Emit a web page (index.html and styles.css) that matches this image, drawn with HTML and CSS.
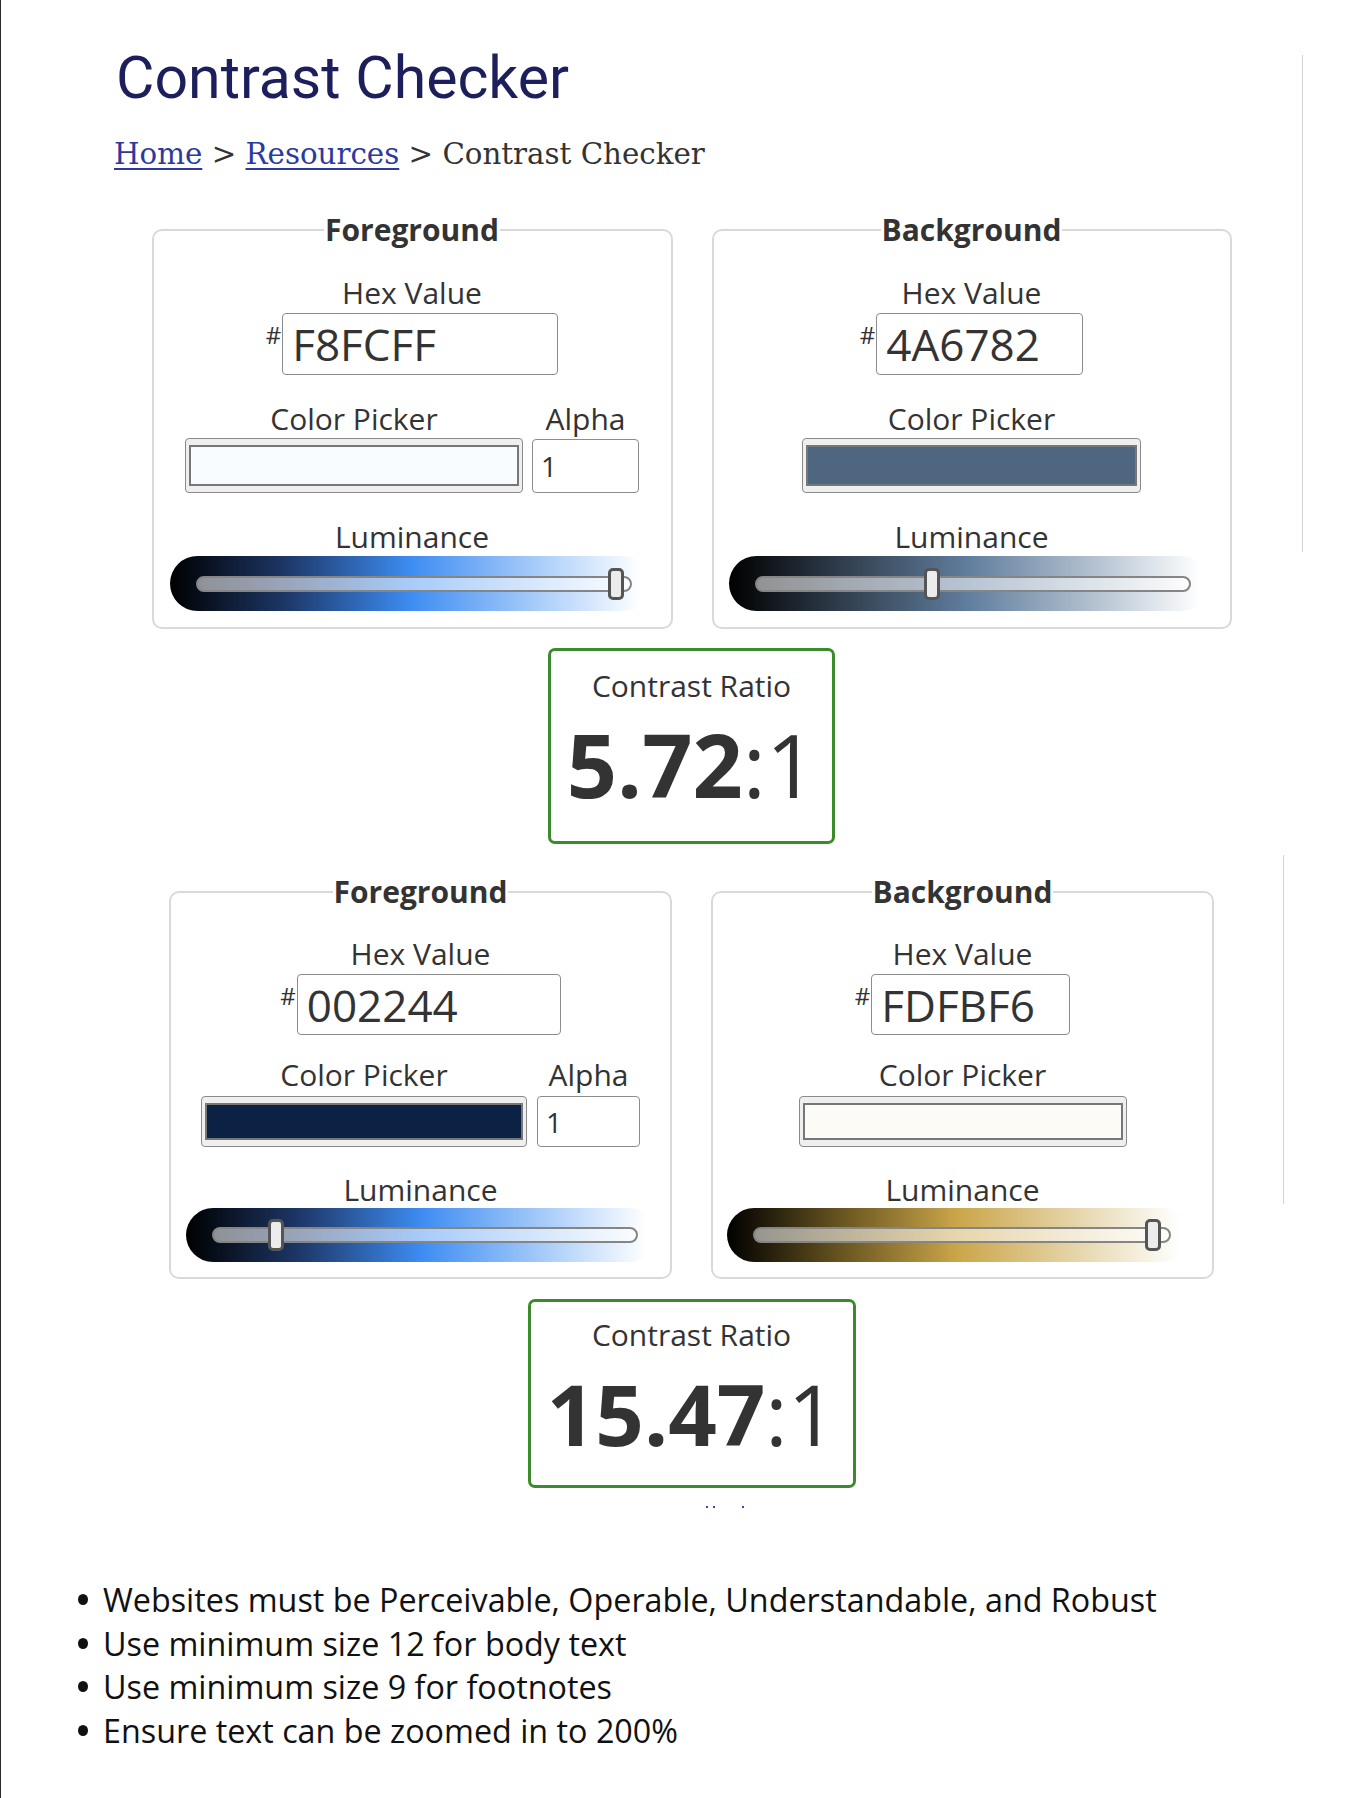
FILE: index.html
```html
<!DOCTYPE html>
<html lang="en">
<head>
<meta charset="utf-8">
<title>Contrast Checker</title>
<link rel="stylesheet" href="styles.css">
</head>
<body>
<div class="page">
  <span class="side-rule side-rule-a"></span>
  <span class="side-rule side-rule-b"></span>
  <main class="content">
    <h1 class="title">Contrast Checker</h1>
    <p class="crumbs"><a class="crumb-link" href="#">Home</a> &gt; <a class="crumb-link" href="#">Resources</a> &gt; Contrast Checker</p>

    <section class="checker checker-a">
      <div class="pair">
        <fieldset class="panel panel-a fg-a">
          <legend class="panel-legend">Foreground</legend>
          <div class="field-label">Hex Value</div>
          <div class="hex-row"><span class="hash">#</span><div class="hex-input">F8FCFF</div></div>
          <div class="picker-row">
            <div class="picker-col">
              <div class="field-label">Color Picker</div>
              <div class="picker"><div class="swatch" style="background:#f8fcff"></div></div>
            </div>
            <div class="alpha-col">
              <div class="field-label">Alpha</div>
              <div class="alpha-input">1</div>
            </div>
          </div>
          <div class="field-label lum-label">Luminance</div>
          <div class="lum lum-blue"><div class="track"><span class="thumb" style="left:96.8%"></span></div></div>
        </fieldset>

        <fieldset class="panel panel-a bg-a">
          <legend class="panel-legend">Background</legend>
          <div class="field-label">Hex Value</div>
          <div class="hex-row"><span class="hash">#</span><div class="hex-input">4A6782</div></div>
          <div class="picker-row">
            <div class="picker-col">
              <div class="field-label">Color Picker</div>
              <div class="picker"><div class="swatch" style="background:#4f6680"></div></div>
            </div>
          </div>
          <div class="field-label lum-label">Luminance</div>
          <div class="lum lum-slate"><div class="track"><span class="thumb" style="left:40.4%"></span></div></div>
        </fieldset>
      </div>

      <div class="ratio ratio-a">
        <div class="ratio-label">Contrast Ratio</div>
        <div class="ratio-value"><b class="ratio-num">5.72</b>:1</div>
      </div>
    </section>

    <section class="checker checker-b">
      <div class="pair">
        <fieldset class="panel panel-b fg-b">
          <legend class="panel-legend">Foreground</legend>
          <div class="field-label">Hex Value</div>
          <div class="hex-row"><span class="hash">#</span><div class="hex-input">002244</div></div>
          <div class="picker-row">
            <div class="picker-col">
              <div class="field-label">Color Picker</div>
              <div class="picker"><div class="swatch" style="background:#0b2244"></div></div>
            </div>
            <div class="alpha-col">
              <div class="field-label">Alpha</div>
              <div class="alpha-input">1</div>
            </div>
          </div>
          <div class="field-label lum-label">Luminance</div>
          <div class="lum lum-blue"><div class="track"><span class="thumb" style="left:14.9%"></span></div></div>
        </fieldset>

        <fieldset class="panel panel-b bg-b">
          <legend class="panel-legend">Background</legend>
          <div class="field-label">Hex Value</div>
          <div class="hex-row"><span class="hash">#</span><div class="hex-input">FDFBF6</div></div>
          <div class="picker-row">
            <div class="picker-col">
              <div class="field-label">Color Picker</div>
              <div class="picker"><div class="swatch" style="background:#fcfbf6"></div></div>
            </div>
          </div>
          <div class="field-label lum-label">Luminance</div>
          <div class="lum lum-gold"><div class="track"><span class="thumb" style="left:96.2%"></span></div></div>
        </fieldset>
      </div>

      <div class="ratio ratio-b">
        <div class="ratio-label">Contrast Ratio</div>
        <div class="ratio-value"><b class="ratio-num">15.47</b>:1</div>
      </div>
      <div class="clipped-dots"><span class="dot"></span><span class="dot"></span><span class="dot dot-far"></span></div>
    </section>

    <ul class="tips">
      <li class="tip">Websites must be Perceivable, Operable, Understandable, and Robust</li>
      <li class="tip">Use minimum size 12 for body text</li>
      <li class="tip">Use minimum size 9 for footnotes</li>
      <li class="tip">Ensure text can be zoomed in to 200%</li>
    </ul>
  </main>
</div>
</body>
</html>
```

FILE: styles.css
```css
html, body {
  margin: 0;
  padding: 0;
  background: #ffffff;
}

body {
  min-height: 1798px;
  border-left: 1px solid #2a2a2a;
  box-sizing: border-box;
  font-family: "Open Sans", "Noto Sans", sans-serif;
  color: #333333;
}

.page {
  position: relative;
  padding: 43px 0 0 113px;
}

.side-rule {
  position: absolute;
  width: 1px;
  background: #d4d4d4;
}
.side-rule-a { left: 1301px; top: 55px; height: 497px; }
.side-rule-b { left: 1282px; top: 855px; height: 349px; }

.content {
  width: 1155px;
}

.title {
  margin: 0 0 0 2px;
  font-family: Roboto, "Liberation Sans", sans-serif;
  font-weight: 400;
  font-size: 59px;
  line-height: 70px;
  color: #1c1f5c;
}

.crumbs {
  margin: 21px 0 0;
  font-family: "DejaVu Serif", "Liberation Serif", serif;
  font-size: 29.3px;
  line-height: 40px;
  color: #333333;
}

.crumb-link {
  color: #2b3a9c;
  text-decoration: underline;
  text-decoration-thickness: 2px;
  text-underline-offset: 4px;
}

/* checker sections */
.checker {
  display: flex;
  flex-direction: column;
  align-items: center;
}
.checker-a { margin-top: 38px; }
.checker-b { margin-top: 30px; }

.pair {
  display: flex;
  gap: 39px;
  align-items: flex-start;
}

.panel {
  margin: 0;
  min-width: 0;
  border: 2px solid #d9d9d9;
  border-radius: 10px;
  box-sizing: border-box;
  display: flex;
  flex-direction: column;
  align-items: center;
}

.panel-a { padding: 26px 0 16px; }
.panel-b { padding: 25px 0 15px; }

.fg-a { width: 521px; }
.bg-a { width: 520px; }
.fg-b, .bg-b { width: 503px; }

.panel-legend {
  margin: 0 auto;
  padding: 0 1px;
  font-weight: 700;
  font-size: 30px;
  line-height: 36px;
  color: #333333;
}

.field-label {
  font-size: 30px;
  line-height: 38px;
  color: #333333;
  text-align: center;
}

.hex-row {
  display: flex;
  align-items: flex-start;
  margin-top: 1px;
}

.hash {
  font-size: 24px;
  line-height: 24px;
  margin-top: 10px;
  margin-right: 1px;
  color: #333333;
}

.hex-input {
  box-sizing: border-box;
  border: 1.5px solid #8c8c8c;
  border-radius: 4px;
  padding-left: 9px;
  font-size: 44px;
  color: #333333;
  display: flex;
  align-items: center;
}

.fg-a .hex-input { width: 276px; height: 62px; }
.bg-a .hex-input { width: 207px; height: 62px; }
.fg-b .hex-input { width: 264px; height: 61px; }
.bg-b .hex-input { width: 199px; height: 61px; }

.picker-row {
  display: flex;
  gap: 9px;
  margin-top: 25px;
}
.panel-b .picker-row { margin-top: 21px; gap: 10px; }

.picker-col, .alpha-col {
  display: flex;
  flex-direction: column;
  align-items: center;
}

.picker {
  box-sizing: border-box;
  border: 1.5px solid #8a8a8a;
  border-radius: 4px;
  background: #efefef;
  padding: 6px 3px;
  display: flex;
}

.swatch {
  flex: 1;
  border: 2px solid #777777;
}

.fg-a .picker { width: 338px; height: 55px; }
.bg-a .picker { width: 339px; height: 55px; }
.fg-b .picker { width: 326px; height: 51px; margin-top: 2px; }
.bg-b .picker { width: 328px; height: 51px; margin-top: 2px; }

.alpha-input {
  box-sizing: border-box;
  border: 1.5px solid #8c8c8c;
  border-radius: 4px;
  padding-left: 8px;
  font-size: 28px;
  color: #333333;
  display: flex;
  align-items: center;
}
.fg-a .alpha-input { width: 107px; height: 54px; margin-top: 1px; }
.fg-b .alpha-input { width: 103px; height: 51px; margin-top: 2px; }

.lum-label { margin-top: 25px; }
.panel-b .lum-label { margin-top: 24px; }

.lum {
  box-sizing: border-box;
  border-radius: 28px;
  display: flex;
  align-items: center;
  padding: 0 18px 0 26px;
  margin-right: 5px;
}
.fg-a .lum, .bg-a .lum { width: 480px; height: 55px; }
.fg-b .lum { width: 470px; height: 54px; margin-top: -1px; margin-right: 0; }
.bg-b .lum { width: 462px; height: 54px; margin-top: -1px; margin-right: 9px; }

.lum-blue {
  background: linear-gradient(90deg, #000000 0%, #1d3767 24%, #3d8cf2 50%, #a6cbf9 76%, #ffffff 98%);
}
.lum-slate {
  background: linear-gradient(90deg, #000000 0%, #313f4f 24%, #617e9e 50%, #b3c1d0 76%, #ffffff 98%);
}
.lum-gold {
  background: linear-gradient(90deg, #000000 0%, #65521f 24%, #cba64a 50%, #e6d6ac 76%, #ffffff 98%);
}

.track {
  position: relative;
  flex: 1;
  height: 16px;
  box-sizing: border-box;
  border: 2px solid #858585;
  border-radius: 8px;
  background: rgba(255, 255, 255, 0.55);
}

.thumb {
  position: absolute;
  top: 50%;
  width: 16px;
  height: 32px;
  box-sizing: border-box;
  transform: translate(-50%, -50%);
  border: 3px solid #555555;
  border-radius: 5px;
  background: #ececec;
}

/* ratio boxes */
.ratio {
  box-sizing: border-box;
  border: 3px solid #3b8a2c;
  border-radius: 7px;
  text-align: center;
  color: #333333;
}

.ratio-label {
  font-size: 30px;
  line-height: 38px;
}

.ratio-value {
  font-weight: 400;
  white-space: nowrap;
}

.ratio-num { font-weight: 700; }

.ratio-a {
  width: 287px;
  height: 196px;
  margin-top: 19px;
  padding-top: 16px;
}
.ratio-a .ratio-value {
  font-size: 88px;
  line-height: 88px;
  margin-top: 15px;
}

.ratio-b {
  width: 328px;
  height: 189px;
  margin-top: 20px;
  padding-top: 14px;
}
.ratio-b .ratio-value {
  font-size: 85px;
  line-height: 85px;
  margin-top: 17px;
}

.clipped-dots {
  display: flex;
  gap: 5px;
  margin-top: 18px;
  margin-left: 66px;
  height: 2px;
}
.dot {
  width: 2px;
  height: 2px;
  background: #3a48b0;
}
.dot-far { margin-left: 22px; }

/* tips */
.tips {
  list-style: none;
  margin: 70px 0 0 -36px;
  padding: 0;
  color: #111111;
  font-size: 32.3px;
  line-height: 43.5px;
}

.tip {
  display: flex;
  align-items: center;
  gap: 15px;
  white-space: nowrap;
}

.tip::before {
  content: "";
  width: 10px;
  height: 11px;
  border-radius: 50%;
  background: #111111;
  flex: none;
}
```
